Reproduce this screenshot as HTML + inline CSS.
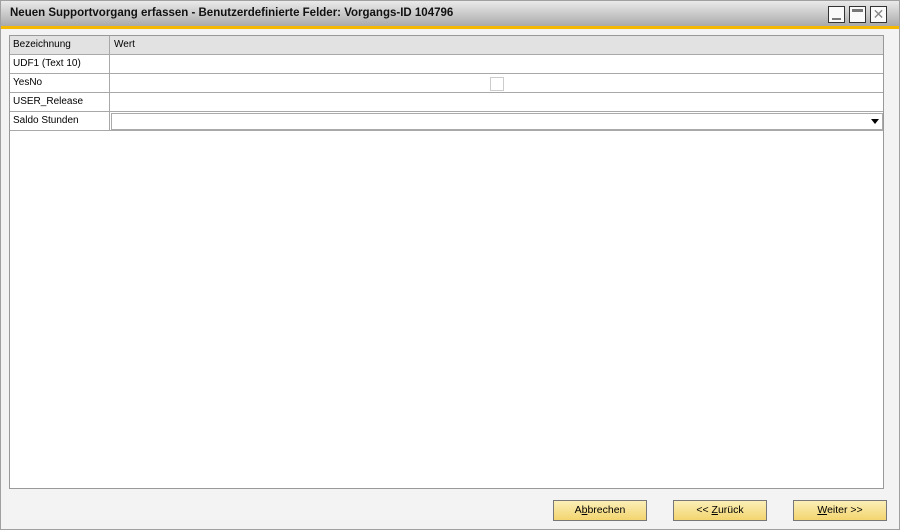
<!DOCTYPE html><html><head><style>
body{margin:0;width:900px;height:530px;background:#f2f2f2;font-family:"Liberation Sans",sans-serif;font-size:10px;position:relative;overflow:hidden;color:#000}
.win{position:absolute;left:0;top:0;width:898px;height:528px;border:1px solid #a0a0a0;background:#f3f3f3}
.title{position:absolute;left:0;top:0;width:898px;height:25px;background:linear-gradient(#eaeaea,#c4c4c4 60%,#a9a9a9);border-bottom:3px solid #f5b800}
.title span{position:absolute;left:9px;top:6px;font-weight:bold;font-size:11.5px;color:#111}
.wb{position:absolute;top:5px;width:17px;height:17px;border:1px solid #333;background:#fafafa;box-sizing:border-box}
.grid{position:absolute;left:8px;top:34px;width:875px;height:454px;background:#fff;border:1px solid #999;box-sizing:border-box}
.row{position:absolute;left:0;width:873px;height:19px;border-bottom:1px solid #a8a8a8;box-sizing:border-box}
.c1{position:absolute;left:0;top:0;width:100px;height:18px;border-right:1px solid #a8a8a8;box-sizing:border-box;padding:3px 0 0 3px}
.hdr{background:#e2e2e2}
.hdr .c2{position:absolute;left:104px;top:3px}
.btn{position:absolute;top:499px;width:94px;height:21px;border:1px solid #777;box-sizing:border-box;background:linear-gradient(#fbefb8,#f3d56e);text-align:center;line-height:19px;font-size:10.5px}
</style></head><body><div class="win">
<div class="title"><span>Neuen Supportvorgang erfassen - Benutzerdefinierte Felder: Vorgangs-ID 104796</span>
<div class="wb" style="left:827px"><div style="position:absolute;left:3px;bottom:2px;width:9px;height:2px;background:#777"></div></div>
<div class="wb" style="left:848px"><div style="position:absolute;left:2px;top:2px;width:11px;height:3px;background:#777"></div></div>
<div class="wb" style="left:869px;color:#888;font-size:14px;line-height:15px;text-align:center">✕</div></div>
<div class="grid">
<div class="row hdr" style="top:0"><div class="c1">Bezeichnung</div><div class="c2">Wert</div></div>
<div class="row" style="top:19px"><div class="c1">UDF1 (Text 10)</div></div>
<div class="row" style="top:38px"><div class="c1">YesNo</div><div style="position:absolute;left:480px;top:3px;width:12px;height:12px;border:1px solid #ccc"></div></div>
<div class="row" style="top:57px"><div class="c1">USER_Release</div></div>
<div class="row" style="top:76px"><div class="c1">Saldo Stunden</div><div style="position:absolute;left:101px;top:1px;width:770px;height:15px;border:1px solid #aaa"><div style="position:absolute;right:3px;top:5px;border-left:4px solid transparent;border-right:4px solid transparent;border-top:5px solid #000"></div></div></div>
</div>
<div class="btn" style="left:552px">A<u>b</u>brechen</div>
<div class="btn" style="left:672px">&lt;&lt; <u>Z</u>urück</div>
<div class="btn" style="left:792px"><u>W</u>eiter &gt;&gt;</div>
</div></body></html>
